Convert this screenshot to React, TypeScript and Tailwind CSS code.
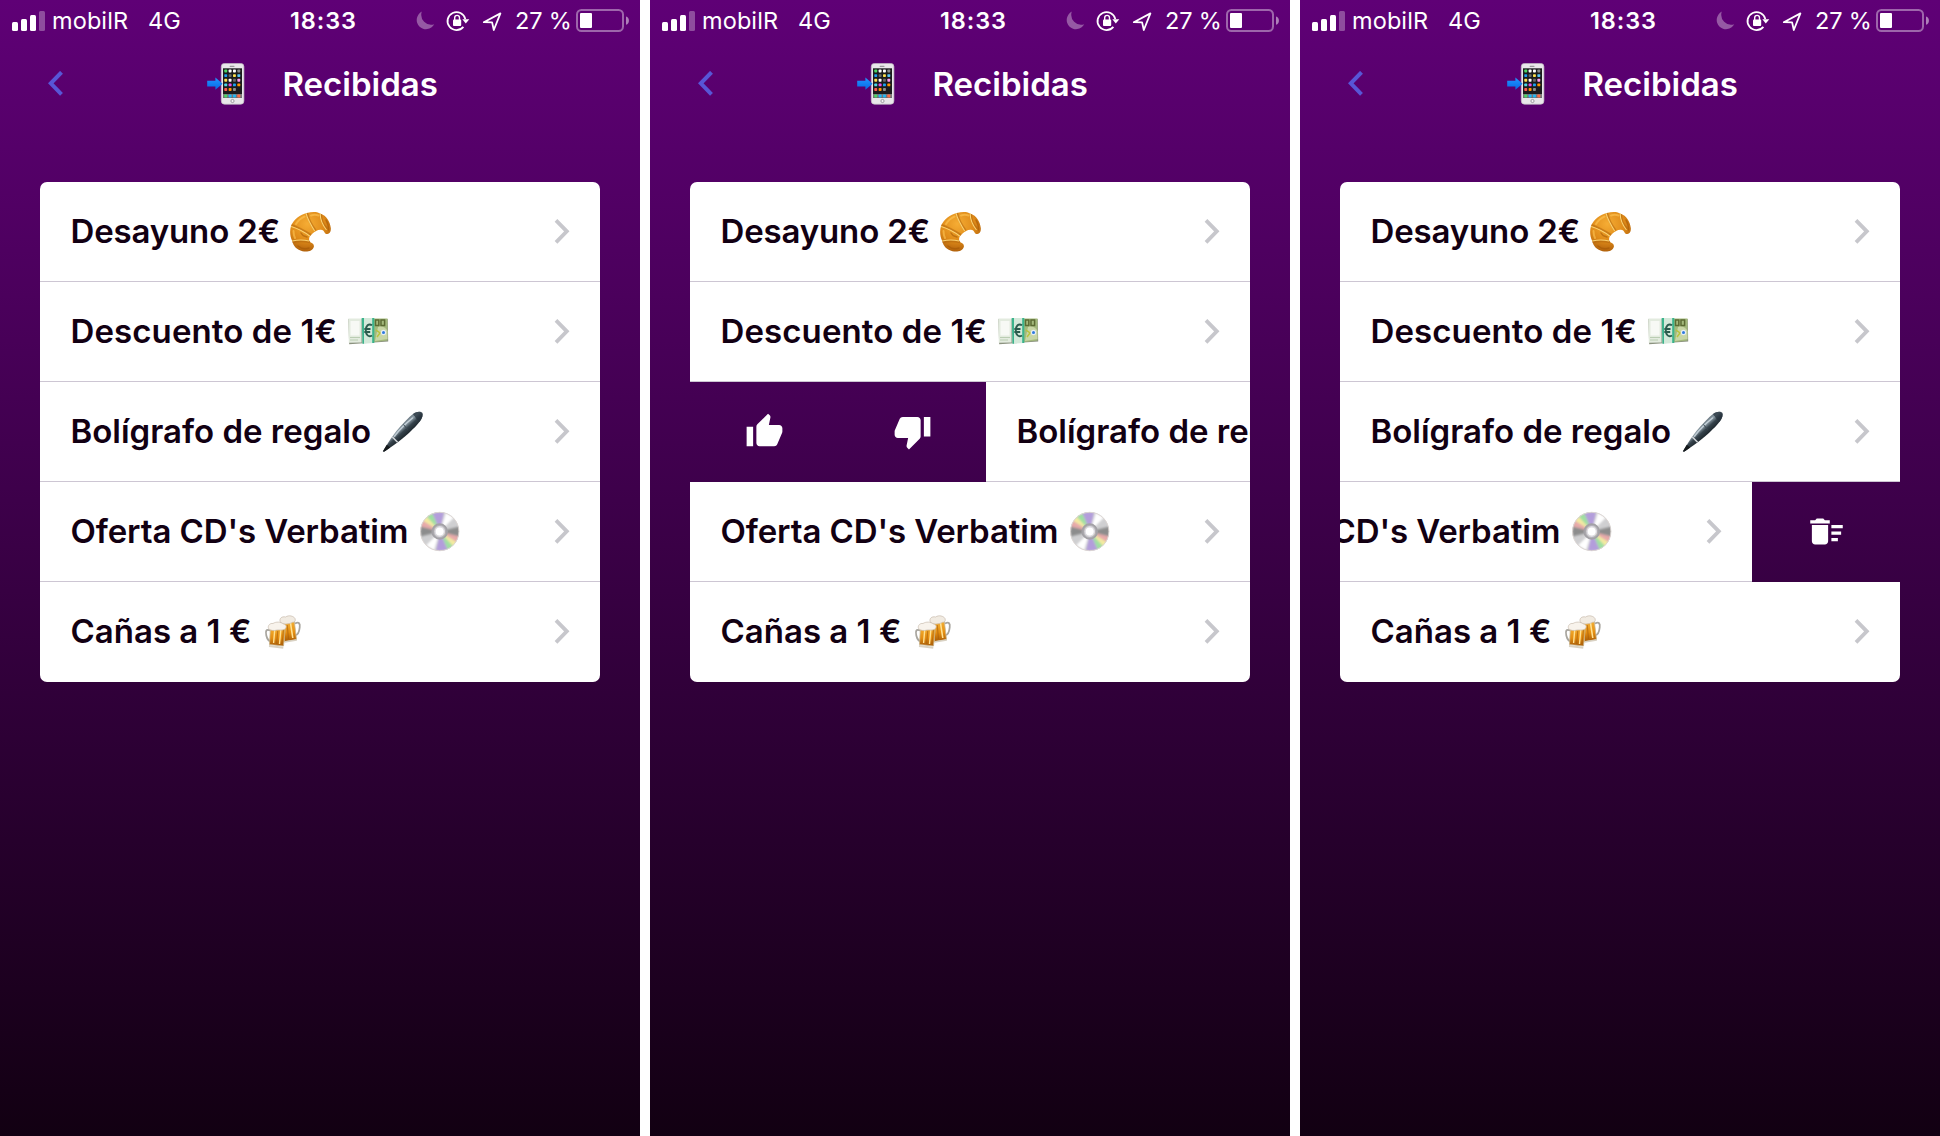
import type { ReactNode } from "react";
import { MdDeleteSweep, MdThumbDown, MdThumbUp } from "react-icons/md";

/* ---------- Emoji drawings ---------- */

const APP_COLORS = [
  ["#4cd964", "#ffffff", "#ffffff", "#8e8e8e"],
  ["#1ea0f0", "#6a6a6a", "#ffe14d", "#5ac8fa"],
  ["#ffe14d", "#ffffff", "#6a6a6a", "#ff9cf0"],
  ["#4fd8e8", "#ea4ce8", "#1ea0f0", "#ff9500"],
  ["#ff5a50", "#ff9500", "#8e8e8e"],
];

function PhoneEmoji() {
  return (
    <svg width="38" height="42" viewBox="0 0 38 42" className="block">
      <defs>
        <linearGradient id="arrowBlue" x1="0" y1="0" x2="0" y2="1">
          <stop offset="0" stopColor="#2196ff" />
          <stop offset="1" stopColor="#0566e6" />
        </linearGradient>
      </defs>
      <rect x="14.3" y="0.4" width="22.6" height="40.8" rx="3.2" fill="#e9e7ea" stroke="#c4c0c6" strokeWidth="0.7" />
      <rect x="22.6" y="2.7" width="5" height="1.2" rx="0.6" fill="#9a989c" />
      <rect x="16" y="5.3" width="19" height="29.6" fill="#1b1b1d" />
      <rect x="16" y="31" width="19" height="3.9" fill="#77777a" />
      {APP_COLORS.map((row, r) =>
        row.map((c, i) => (
          <rect key={`${r}-${i}`} x={17.3 + i * 4.35} y={6.5 + r * 4.65} width="2.9" height="2.9" rx="0.7" fill={c} />
        )),
      )}
      {["#4cd964", "#22b8f5", "#22b8f5", "#ff6a45"].map((c, i) => (
        <rect key={i} x={17.3 + i * 4.35} y="31.5" width="2.9" height="2.9" rx="0.7" fill={c} />
      ))}
      <circle cx="25.5" cy="38" r="1.6" fill="#f4f2f4" stroke="#8c8a8e" strokeWidth="0.8" />
      <path d="M0.2 17.8h8.2v-3.2l7.2 6.1-7.2 6.1v-3.2H0.2z" fill="url(#arrowBlue)" />
    </svg>
  );
}

function CroissantEmoji() {
  return (
    <svg width="42" height="42" viewBox="0 0 42 42" className="block">
      <defs>
        <radialGradient id="crust" cx="0.42" cy="0.3" r="0.75">
          <stop offset="0" stopColor="#f5ac34" />
          <stop offset="0.55" stopColor="#e08c1a" />
          <stop offset="1" stopColor="#a95a09" />
        </radialGradient>
      </defs>
      <path
        d="M1 15C4 8 10 3.500 17 2C22 0.400 28 0.500 31 3C36 4.500 40 10 40.800 17C41.200 21 39.500 23.600 36.500 23C34 22.300 34.500 19.500 32 19C29 17.800 25.500 19.800 22 23C19.500 25.400 18 28 20 31C22 32.500 24.500 32.700 23.800 36C22.800 39.800 17.500 41.300 12.500 40.200C7 38.800 3.500 35.500 2.200 30C-0.300 25 -0.300 19.500 1 15Z"
        fill="url(#crust)"
      />
      <path d="M17 2C18 7 21 13 25.500 19.500M31 3C31 8 32.500 13 37 18M1.500 14C7 16 14 19.500 21 24M2.500 31C8 30 13 29.600 20 31.200" fill="none" stroke="#b0640c" strokeWidth="2.200" opacity="0.55" />
      <path d="M16 2.200C17.500 8 20.500 13.500 24.700 20M30.200 2.600C30.200 8 32 13.500 36.500 19M1.200 15.500C7.500 17.500 14 20.500 20 25.200M2.200 30C8 28.700 13 28.500 19 30" fill="none" stroke="#fbd474" strokeWidth="1.100" />
      <path d="M6 13C8.500 9 11 7 14.500 5.500M21 4.500C24 3.500 26 3.600 28.500 4.500M3.500 20C3.500 23 4 25 5 27" fill="none" stroke="#ffc755" strokeWidth="2" strokeLinecap="round" opacity="0.6" />
      <path d="M8 35C11 37.500 15 38.500 19 37M11 22C12 24 14 25.500 17 26M36 9C38 12 38.500 15 38.500 19" fill="none" stroke="#a05506" strokeWidth="1.400" strokeLinecap="round" opacity="0.55" />
    </svg>
  );
}

function EuroEmoji() {
  return (
    <svg width="42" height="42" viewBox="0 0 42 42" className="block">
      <path d="M0.300 8L39.700 8L40.200 30.500L1.200 33.200Z" fill="#8b927f" />
      <path d="M0.300 7.500H13.500V31.500L0.800 31.800Z" fill="#e3ebdf" />
      <rect x="2.500" y="10" width="9" height="14.500" fill="#f7f9f5" />
      <path d="M2 26.500H12M2 29H10" stroke="#b5c9ae" strokeWidth="0.900" />
      <path d="M26 7.500H39.500V29.500L26 31Z" fill="#a3b97c" />
      <path d="M30 16C34 14 38 17 39.500 20V28L27 30Z" fill="#c9d6a6" />
      <path d="M27.500 9h3.300v5.500h-3.300zM33 9h3.600v5.500H33z" fill="none" stroke="#5c6b34" strokeWidth="1.500" />
      <path d="M28 19L32 22L29 26" fill="none" stroke="#b9c23e" strokeWidth="1.500" />
      <circle cx="35.500" cy="21.500" r="2.700" fill="#e6edf2" />
      <circle cx="35.500" cy="21.500" r="1.500" fill="#2f7be0" />
      <path d="M13.500 7H26V32L14.500 32.800Z" fill="#d3e9da" />
      <path d="M13.700 7H16V32.700H14.500ZM24.200 7H26.300V32H24.200Z" fill="#3bb48c" />
      <path d="M24 14.200C20.500 12 17.800 15 17.800 19.300C17.800 23.800 20.500 26.500 24 24.500M16.300 18H22.500M16.300 21H22.200" fill="none" stroke="#2c5c4e" strokeWidth="1.900" />
    </svg>
  );
}

function PenEmoji() {
  return (
    <svg width="42" height="42" viewBox="0 0 42 42" className="block">
      <defs>
        <linearGradient id="penBody" x1="0.3" y1="0.3" x2="0.62" y2="0.66">
          <stop offset="0" stopColor="#26323a" />
          <stop offset="0.4" stopColor="#8f9fa9" />
          <stop offset="0.6" stopColor="#36434c" />
          <stop offset="1" stopColor="#0f161b" />
        </linearGradient>
      </defs>
      <path d="M0.800 40.400L6.800 30.800C12.500 21.700 21.500 11 31 3C34.500 0.200 38.500 0 40.200 1.800C41.300 4 40.400 7 38 10.200C32.500 17.300 22.600 26.300 12.300 33.700L2.500 40.600Z" fill="url(#penBody)" />
      <path d="M31 3C34.500 0.200 38.500 0 40.200 1.800C41.300 4 40.400 7 38 10.200C36 10.500 33 6 31 3Z" fill="#26323c" opacity="0.75" />
      <path d="M12.500 25.200C17.500 18.700 23.500 12.700 30.500 7" stroke="#dbe6ec" strokeWidth="1.600" strokeLinecap="round" opacity="0.7" fill="none" />
      <path d="M21.500 13.500L25.500 18.500" stroke="#3d4a53" strokeWidth="1" />
      <path d="M10.400 26L15.600 31.300" stroke="#d3d7da" strokeWidth="1.500" />
      <path d="M0.800 40.400L4.800 33.800L8.300 36.600L2.500 40.600Z" fill="#15191c" />
    </svg>
  );
}

const DISC_SECTORS: { color: string; d: string }[] = [
  { color: "#b39ddb", d: "M21 20.500L13 1.500L25 1Z" },
  { color: "#9fe0a0", d: "M21 20.500L7.500 5.500L13 2Z" },
  { color: "#f4eba0", d: "M21 20.500L3.500 9.500L7.500 5.500Z" },
  { color: "#e8a9a9", d: "M21 20.500L1.500 15.500L3.500 9.500Z" },
  { color: "#8c8c8c", d: "M21 20.500L1.500 15.500L1.500 25.500Z" },
  { color: "#b39ddb", d: "M21 20.500L29 39.500L17 40Z" },
  { color: "#9fe0a0", d: "M21 20.500L34.500 35.500L29 39Z" },
  { color: "#f4eba0", d: "M21 20.500L38.500 31.500L34.500 35.500Z" },
  { color: "#e8a9a9", d: "M21 20.500L40.500 25.500L38.500 31.500Z" },
  { color: "#8c8c8c", d: "M21 20.500L40.500 15.500L40.500 25.500Z" },
  { color: "#ffffff", d: "M21 20.500L27 1.500L35 6.500Z" },
  { color: "#ffffff", d: "M21 20.500L15 39.500L7 34.500Z" },
];

function DiscEmoji() {
  return (
    <svg width="42" height="42" viewBox="0 0 42 42" className="block">
      <defs>
        <clipPath id="discClip">
          <circle cx="20.700" cy="20.500" r="19.400" />
        </clipPath>
        <filter id="discBlend" x="-10%" y="-10%" width="120%" height="120%">
          <feGaussianBlur stdDeviation="1.100" />
        </filter>
      </defs>
      <g clipPath="url(#discClip)">
        <rect width="42" height="42" fill="#cfcfd1" />
        <g filter="url(#discBlend)">
          {DISC_SECTORS.map((s, i) => (
            <path key={i} d={s.d} fill={s.color} />
          ))}
        </g>
      </g>
      <circle cx="20.700" cy="20.500" r="19.200" fill="none" stroke="#dcd6d2" strokeWidth="0.900" />
      <circle cx="20.700" cy="20.500" r="7.400" fill="#b3b1b5" fillOpacity="0.8" stroke="#a3a1a6" strokeWidth="1.800" />
      <circle cx="20.700" cy="20.500" r="4.700" fill="#ffffff" stroke="#dddbe0" strokeWidth="1.400" />
    </svg>
  );
}

function BeersEmoji() {
  return (
    <svg width="42" height="42" viewBox="0 0 42 42" className="block">
      <defs>
        <linearGradient id="beer" x1="0" y1="0" x2="0" y2="1">
          <stop offset="0" stopColor="#f6b63c" />
          <stop offset="0.6" stopColor="#e58e10" />
          <stop offset="1" stopColor="#a85c08" />
        </linearGradient>
      </defs>
      <path d="M33 12.500C37 10.500 38.300 12.500 37.700 16.500C37.200 21 36 23.800 33.500 24" fill="none" stroke="#a9a69f" strokeWidth="1.800" />
      <path d="M20 9L32 8L34.500 28.500L22.500 30.500Z" fill="url(#beer)" stroke="#c9b48a" strokeWidth="0.800" />
      <path d="M28.500 12L30.800 27" stroke="#ffe192" strokeWidth="1.600" />
      <path d="M25.200 14L26.500 28" stroke="#a65f0d" strokeWidth="1.200" opacity="0.6" />
      <path d="M22.500 31L34.800 29" stroke="#d9d2c3" strokeWidth="1.500" />
      <path d="M18.500 11.500C16.500 7.500 20 5 23.500 6C27 3.700 31.500 5 33 7.500C34 10 32.500 11.500 30.500 11.300C27.500 13 22 14 18.500 11.500Z" fill="#f1ebe2" stroke="#c9bcae" strokeWidth="0.700" />
      <path d="M8 19.500C4 17.500 3.300 20.500 4.300 24.500C5.200 28.500 6.700 30.300 9.500 30.500" fill="none" stroke="#a9a69f" strokeWidth="1.800" />
      <path d="M8.500 15L23.500 16L21.500 35L7.500 33.500Z" fill="url(#beer)" stroke="#c9b48a" strokeWidth="0.800" />
      <path d="M12.700 19L11.600 32M18.800 19L17.500 33" stroke="#ffe192" strokeWidth="1.400" />
      <path d="M15.700 20L14.600 33M21.500 19L20 33" stroke="#a65f0d" strokeWidth="1.200" opacity="0.6" />
      <path d="M7 35L21.300 36.800" stroke="#d9d2c3" strokeWidth="2" />
      <path d="M6.500 17.500C5.500 14.500 8 12 11 12.500C14 10.500 18.500 10.700 21.500 13C24.500 13.500 25.200 16.500 22.500 18.300C20 19.700 17.500 18.600 15 19C12 20 8 19.500 6.500 17.500Z" fill="#f8f3ec" stroke="#c9bcae" strokeWidth="0.700" />
    </svg>
  );
}

/* ---------- Status bar ---------- */

function SignalBars() {
  return (
    <svg width="34" height="20" viewBox="0 0 34 20" className="block" fill="#fff">
      <rect x="0" y="11" width="6" height="9" rx="1.500" />
      <rect x="9" y="8" width="6" height="12" rx="1.500" />
      <rect x="18" y="4" width="6" height="16" rx="1.500" />
      <rect x="27" y="0" width="6" height="20" rx="1.500" opacity="0.3" />
    </svg>
  );
}

function StatusIcons() {
  return (
    <svg width="86" height="22" viewBox="0 0 86 22" className="block">
      <path d="M5.800 1.600A9.300 9.300 0 1 0 18.200 14.300A10 10 0 0 1 5.800 1.600Z" fill="#fff" opacity="0.35" />
      <path d="M49.300 9.100A9 9 0 1 0 47.400 16.900" fill="none" stroke="#fff" strokeWidth="1.800" />
      <path d="M46.300 9.300H53.300L49.800 13.500Z" fill="#fff" />
      <rect x="37" y="9.500" width="8.200" height="6.500" rx="0.900" fill="#fff" />
      <path d="M38.700 10V7.800a2.400 2.400 0 0 1 4.800 0V10" fill="none" stroke="#fff" strokeWidth="1.400" />
      <path d="M67.800 12.200L84.400 3.400L77.800 20L76.100 12.400Z" fill="none" stroke="#fff" strokeWidth="1.800" strokeLinejoin="round" />
    </svg>
  );
}

function Battery() {
  return (
    <svg width="54" height="24" viewBox="0 0 54 24" className="block">
      <rect x="1" y="1" width="46" height="21" rx="4.500" fill="none" stroke="#fff" strokeOpacity="0.4" strokeWidth="2" />
      <rect x="4" y="4" width="12" height="15" rx="1" fill="#fff" />
      <path d="M50 7.500C53.900 8.500 53.900 14.800 50 15.800Z" fill="#fff" opacity="0.5" />
    </svg>
  );
}

function StatusBar() {
  return (
    <div className="flex h-[41px] items-center pl-3 text-[23.5px] leading-none whitespace-nowrap text-white">
      <SignalBars />
      <span className="ml-1.5 w-[96px] pt-px tracking-[0.1px]">mobilR</span>
      <span className="w-[142px] pt-px">4G</span>
      <span className="w-[126px] pt-px font-semibold tracking-[0.9px]">18:33</span>
      <StatusIcons />
      <span className="ml-[13px] w-[61px] pt-px tracking-[-0.2px]">27 %</span>
      <Battery />
    </div>
  );
}

/* ---------- Page header ---------- */

function Header() {
  return (
    <div className="flex h-[86px] items-center text-white">
      <svg width="16" height="26" viewBox="0 0 16 26" className="ml-12 block">
        <path d="M13.500 1.300L2.800 12.300L13.500 23.300" fill="none" stroke="#5856d6" strokeWidth="4" />
      </svg>
      <div className="ml-[143px] w-[75.500px]">
        <PhoneEmoji />
      </div>
      <h1 className="text-[33px] leading-none font-semibold">Recibidas</h1>
    </div>
  );
}

/* ---------- Offers list ---------- */

type Offer = { title: string; titleClass: string; emoji: ReactNode };

const OFFERS: Offer[] = [
  { title: "Desayuno 2€", titleClass: "w-[219.5px] tracking-[-0.15px]", emoji: <CroissantEmoji /> },
  { title: "Descuento de 1€", titleClass: "w-[277.5px] tracking-[0.1px]", emoji: <EuroEmoji /> },
  { title: "Bolígrafo de regalo", titleClass: "w-[311.5px]", emoji: <PenEmoji /> },
  { title: "Oferta CD's Verbatim", titleClass: "w-[348.5px] tracking-[-0.1px]", emoji: <DiscEmoji /> },
  { title: "Cañas a 1 €", titleClass: "w-[191.5px]", emoji: <BeersEmoji /> },
];

function OfferContent({ offer, last }: { offer: Offer; last: boolean }) {
  return (
    <div
      className={
        last
          ? "flex h-[100px] w-[560px] shrink-0 items-center bg-white pr-[30px] pb-px pl-[30.5px]"
          : "flex h-[100px] w-[560px] shrink-0 items-center border-b border-[#cdc6d3] bg-white pr-[30px] pl-[30.5px]"
      }
    >
      <span className={`shrink-0 text-[33px] leading-none font-semibold whitespace-nowrap text-[#120012] ${offer.titleClass}`}>
        {offer.title}
      </span>
      {offer.emoji}
      <svg width="16" height="26" viewBox="0 0 16 26" className="ml-auto block shrink-0">
        <path d="M2 1.300L12.800 12.300L2 23.300" fill="none" stroke="#c7c7cc" strokeWidth="3.800" />
      </svg>
    </div>
  );
}

function Action({ children }: { children: ReactNode }) {
  return <div className="flex h-full w-[148px] shrink-0 items-center justify-center pb-0.5 text-white">{children}</div>;
}

function Phone({ opened, side }: { opened?: number; side?: "left" | "right" }) {
  return (
    <div className="h-[1136px] w-[640px] overflow-hidden bg-[linear-gradient(to_bottom,#5f0076,#120012)]">
      <StatusBar />
      <Header />
      <div className="mx-10 mt-[55px] overflow-hidden rounded-[7px]">
        {OFFERS.map((offer, i) => {
          const open = opened === i;
          return (
            <div
              key={offer.title}
              className={open && side === "right" ? "flex h-[100px] justify-end overflow-hidden" : "flex h-[100px] overflow-hidden"}
            >
              {open && side === "left" && (
                <>
                  <Action>
                    <MdThumbUp size={39} />
                  </Action>
                  <Action>
                    <MdThumbDown size={39} />
                  </Action>
                </>
              )}
              <OfferContent offer={offer} last={i === OFFERS.length - 1} />
              {open && side === "right" && (
                <Action>
                  <MdDeleteSweep size={39} />
                </Action>
              )}
            </div>
          );
        })}
      </div>
    </div>
  );
}

export default function App() {
  return (
    <div className="flex h-[1136px] w-[1940px] gap-2.5 overflow-hidden bg-white font-['Inter',sans-serif]">
      <Phone />
      <Phone opened={2} side="left" />
      <Phone opened={3} side="right" />
    </div>
  );
}
